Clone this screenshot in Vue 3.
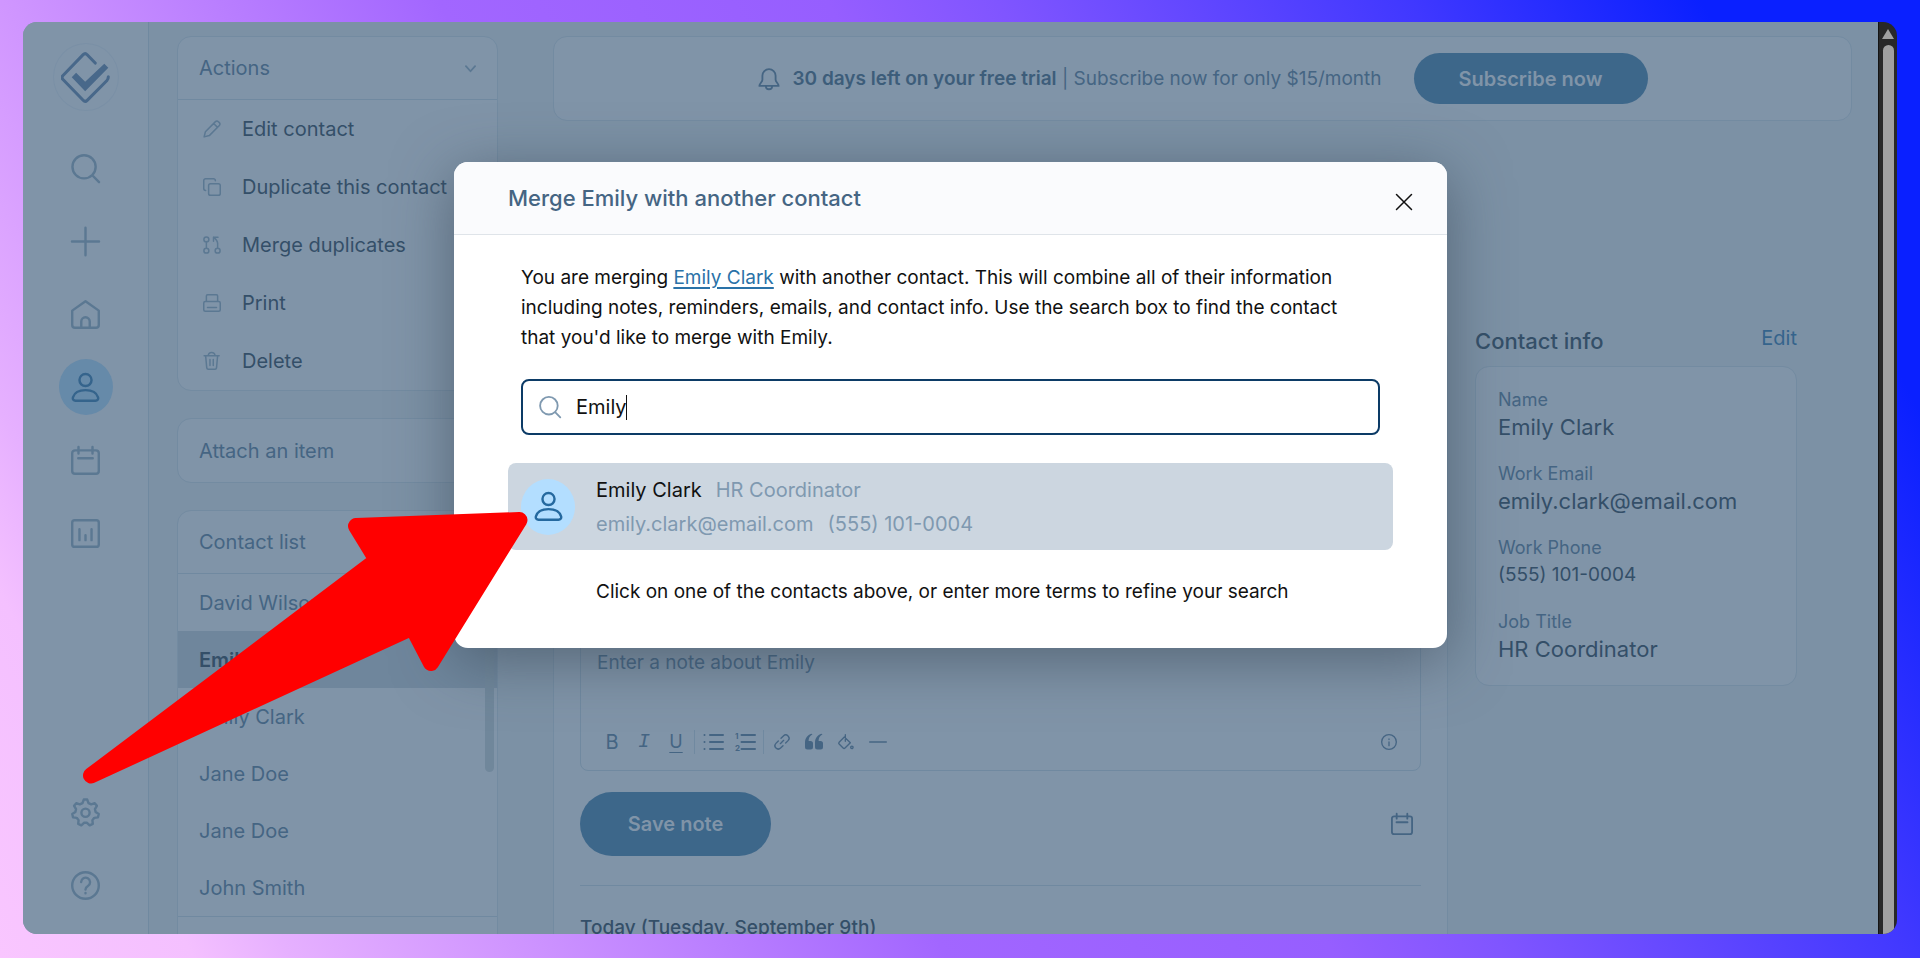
<script setup>
import { ref } from 'vue'

// 1. Icon paths, all on a 24 x 24 grid
const circle = (cx, cy, r) => `M${cx - r} ${cy}a${r} ${r} 0 1 0 ${r * 2} 0a${r} ${r} 0 1 0 ${-r * 2} 0z`

const gear = () => {
  const teeth = 7
  const points = []
  for (let i = 0; i < teeth; i++) {
    const mid = (i * 2 * Math.PI) / teeth - Math.PI / 2
    for (const [offset, radius] of [[-0.3, 8.4], [-0.13, 11], [0.13, 11], [0.3, 8.4]]) {
      const x = 12 + Math.cos(mid + offset) * radius
      const y = 12.2 + Math.sin(mid + offset) * radius
      points.push(`${x.toFixed(2)} ${y.toFixed(2)}`)
    }
  }
  return `M${points.join('L')}z${circle(12, 12.2, 3.4)}`
}

const icons = {
  search: `${circle(10.8, 10.6, 9.6)}M17.6 17.6L23.2 23.3`,
  plus: 'M12 .6V23.4M.8 12H23.2',
  home: 'M1 8.8L12 1L23 8.8V20.6a2.4 2.4 0 0 1-2.4 2.4H3.4a2.4 2.4 0 0 1-2.4-2.4zM8.5 23v-5.2a3.5 3.5 0 0 1 7 0V23',
  user: `${circle(12, 5.8, 5)}M12 14.2c-5.2 0-9.2 2.2-10.4 5.9c-.5 1.8.6 2.9 2.1 2.9h16.6c1.5 0 2.6-1.1 2.1-2.9c-1.2-3.7-5.2-5.9-10.4-5.9z`,
  calendar: 'M3.4 3.6H20.6a2.4 2.4 0 0 1 2.4 2.4V20.6a2.4 2.4 0 0 1-2.4 2.4H3.4a2.4 2.4 0 0 1-2.4-2.4V6a2.4 2.4 0 0 1 2.4-2.4zM6.2.8V6.2M17.8.8V6.2M6 10.1H18',
  chart: 'M3 1H21a2 2 0 0 1 2 2V21a2 2 0 0 1-2 2H3a2 2 0 0 1-2-2V3a2 2 0 0 1 2-2zM7 8.5V17.5M12 13.5V17.5M17 8.5V17.5',
  gear: gear(),
  help: `${circle(12, 12, 11)}M8.4 9.2a3.7 3.7 0 1 1 5.6 3.2c-1.4.8-2 1.4-2 2.9M12 18.2v.3`,
  pencil: 'M1.5 22.5L3.2 15.6L16.6 2.2a2.7 2.7 0 0 1 3.9 0l1.3 1.3a2.7 2.7 0 0 1 0 3.9L8.4 20.8zM14.2 4.6L19.4 9.8',
  copy: 'M10 7.5H20.500a2.500 2.500 0 0 1 2.500 2.500V20.500a2.500 2.500 0 0 1-2.500 2.500H10a2.500 2.500 0 0 1-2.500-2.500V10a2.500 2.500 0 0 1 2.500-2.500zM3.500 16.500a2.500 2.500 0 0 1-2.500-2.500V3.500A2.500 2.500 0 0 1 3.500 1H14a2.500 2.500 0 0 1 2.500 2.500',
  merge: `${circle(4.5, 4.5, 3.3)}${circle(4.5, 19.5, 3.3)}${circle(19.5, 19.5, 3.3)}M4.5 7.800V16.200M19.5 16.200V10c0-3-2-5.500-5.500-8.500M14 7V1.500H20`,
  printer: 'M4.5 10V2.5a1.5 1.5 0 0 1 1.5-1.5H18a1.5 1.5 0 0 1 1.5 1.5V10M3 10H21a2 2 0 0 1 2 2V21a2 2 0 0 1-2 2H3a2 2 0 0 1-2-2V12a2 2 0 0 1 2-2zM6 18H18',
  trash: 'M1.5 5H21.5M3.5 5L5 21.3a2 2 0 0 0 2 1.7H16a2 2 0 0 0 2-1.7L19.5 5M7 5a4.5 4.5 0 0 1 9 0M9.3 10V18M13.7 10V18',
  close: 'M2 2L22 22M22 2L2 22',
  chevron: 'M2 7L12 18L22 7',
  bell: 'M12 1.2a7.2 7.2 0 0 0-7.2 7.2v4.4c0 2.6-3.3 4-3.3 6.7h21c0-2.7-3.3-4.1-3.3-6.7V8.4A7.2 7.2 0 0 0 12 1.2zM8.6 19.8a3.4 3.4 0 0 0 6.8 0',
  link: 'M9.5 14.5L14.5 9.5M10.5 6.5l3.6-3.6a4.9 4.9 0 0 1 7 7l-3.6 3.6M13.5 17.5l-3.6 3.6a4.9 4.9 0 0 1-7-7l3.6-3.6',
  fill: `M9.5 4.5L1.7 12.3a2 2 0 0 0 0 2.8l6 6a2 2 0 0 0 2.8 0L18.5 13zM11 1V11${circle(20.8, 20, 1.8)}`,
  line: 'M1 12H23',
  info: `${circle(12, 12, 11)}M12 7.5v.8M12 12v5.5`
}

// 2. Page data
const mainNav = ['search', 'plus', 'home', 'user', 'calendar', 'chart']
const footNav = ['gear', 'help']
const activeNav = ref('user')

const actions = [
  { icon: 'pencil', label: 'Edit contact' },
  { icon: 'copy', label: 'Duplicate this contact' },
  { icon: 'merge', label: 'Merge duplicates' },
  { icon: 'printer', label: 'Print' },
  { icon: 'trash', label: 'Delete' }
]

const contacts = ['David Wilson', 'Emily Clark', 'Emily Clark', 'Jane Doe', 'Jane Doe', 'John Smith']
const selected = ref(1)

const details = [
  { label: 'Name', value: 'Emily Clark' },
  { label: 'Work Email', value: 'emily.clark@email.com' },
  { label: 'Work Phone', value: '(555) 101-0004', phone: true },
  { label: 'Job Title', value: 'HR Coordinator' }
]

const note = ref('')
const query = ref('Emily')
const isMerging = ref(true)

const closeModal = () => {
  isMerging.value = false
}
</script>

<template>
  <div class="stage">
    <div class="window">
      <div class="app">
        <nav class="sidebar">
          <a href="#" class="logo" aria-label="Dashboard">
            <svg viewBox="184 155 146 152">
              <path d="M286 188L262 163Q256 157 250 163L190 225Q184 231 190 237L250 299Q256 305 262 299L321 240Q325 236 325 229" fill="none" stroke="currentColor" stroke-width="9" stroke-linecap="round" stroke-linejoin="round" />
              <path d="M216 230L229 217L256 244L313 190L325 202L256 272z" fill="currentColor" />
            </svg>
          </a>
          <a v-for="name in mainNav" :key="name" href="#" class="nav-link" :class="{ active: name === activeNav }" :aria-label="name" @click.prevent="activeNav = name">
            <svg class="icon" viewBox="0 0 24 24"><path :d="icons[name]" /></svg>
          </a>
          <div class="nav-space"></div>
          <a v-for="name in footNav" :key="name" href="#" class="nav-link" :aria-label="name" @click.prevent="activeNav = name">
            <svg class="icon" viewBox="0 0 24 24"><path :d="icons[name]" /></svg>
          </a>
        </nav>

        <aside class="left-column">
          <section class="card">
            <h2 class="card-title divided">
              Actions
              <svg class="icon chevron" viewBox="0 0 24 24"><path :d="icons.chevron" /></svg>
            </h2>
            <button v-for="action in actions" :key="action.label" class="action">
              <svg class="icon" viewBox="0 0 24 24"><path :d="icons[action.icon]" /></svg>
              {{ action.label }}
            </button>
          </section>

          <section class="card">
            <h2 class="card-title">Attach an item</h2>
          </section>

          <section class="card">
            <h2 class="card-title divided">Contact list</h2>
            <div class="contacts">
              <a v-for="(name, index) in contacts" :key="index" href="#" class="contact" :class="{ selected: index === selected }" @click.prevent="selected = index">{{ name }}</a>
              <div class="list-thumb"></div>
            </div>
          </section>
        </aside>

        <main class="main">
          <div class="banner card">
            <svg class="icon bell" viewBox="0 0 24 24"><path :d="icons.bell" /></svg>
            <p class="banner-text"><strong>30 days left on your free trial</strong> | Subscribe now for only $15/month</p>
            <button class="pill subscribe">Subscribe now</button>
          </div>

          <div class="columns">
            <section class="card notes">
              <div class="editor">
                <textarea v-model="note" placeholder="Enter a note about Emily" aria-label="Note"></textarea>
                <div class="toolbar">
                  <button class="tool">B</button>
                  <button class="tool italic">I</button>
                  <button class="tool underline">U</button>
                  <span class="tool-split"></span>
                  <button class="tool" aria-label="Bulleted list">
                    <svg class="icon wide" viewBox="0 0 20 18"><path d="M1.5 2v.1M1.5 9v.1M1.5 16v.1M7 2H20M7 9H20M7 16H20" /></svg>
                  </button>
                  <button class="tool" aria-label="Numbered list">
                    <svg class="icon wide" viewBox="0 0 20 18">
                      <path d="M6.5 2H20M6.5 9H20M6.5 16H20" />
                      <text x="0" y="6">1</text>
                      <text x="0" y="18">2</text>
                    </svg>
                  </button>
                  <span class="tool-split"></span>
                  <button class="tool" aria-label="Link"><svg class="icon" viewBox="0 0 24 24"><path :d="icons.link" /></svg></button>
                  <button class="tool" aria-label="Quote">
                    <svg class="icon wide" viewBox="0 0 20 18">
                      <path class="solid" d="M8.5 1.2C5.5 3 4.6 5.2 4.6 8H6.5a2.5 2.5 0 0 1 2.5 2.5V14a2.5 2.5 0 0 1-2.5 2.5H3.5A2.5 2.5 0 0 1 1 14V9.5C1 5.5 3.5 2 7.5.8zM18.5 1.2C15.5 3 14.6 5.2 14.6 8H16.5a2.5 2.5 0 0 1 2.5 2.5V14a2.5 2.5 0 0 1-2.5 2.5H13.5A2.5 2.5 0 0 1 11 14V9.5C11 5.5 13.5 2 17.5.8z" />
                    </svg>
                  </button>
                  <button class="tool" aria-label="Highlight"><svg class="icon" viewBox="0 0 24 24"><path :d="icons.fill" /></svg></button>
                  <button class="tool" aria-label="Divider"><svg class="icon wide" viewBox="0 0 24 24"><path :d="icons.line" /></svg></button>
                  <button class="tool tool-info" aria-label="Formatting help"><svg class="icon" viewBox="0 0 24 24"><path :d="icons.info" /></svg></button>
                </div>
              </div>
              <div class="save-row">
                <button class="pill save">Save note</button>
                <button class="date-btn" aria-label="Pick a date"><svg class="icon" viewBox="0 0 24 24"><path :d="icons.calendar" /></svg></button>
              </div>
              <h3 class="day">Today (Tuesday, September 9th)</h3>
            </section>

            <aside class="info">
              <div class="info-head">
                <h2>Contact info</h2>
                <a href="#">Edit</a>
              </div>
              <dl class="card details">
                <div v-for="item in details" :key="item.label">
                  <dt>{{ item.label }}</dt>
                  <dd :class="{ phone: item.phone }">{{ item.value }}</dd>
                </div>
              </dl>
            </aside>
          </div>
        </main>

        <!-- Merge dialog -->
        <div v-if="isMerging" class="overlay" @click.self="closeModal">
          <div class="modal" role="dialog" aria-labelledby="merge-title">
            <header class="modal-head">
              <h1 id="merge-title">Merge Emily with another contact</h1>
              <button class="close-btn" aria-label="Close" @click="closeModal">
                <svg class="icon" viewBox="0 0 24 24"><path :d="icons.close" /></svg>
              </button>
            </header>
            <div class="modal-body">
              <p class="intro">You are merging <a href="#">Emily Clark</a> with another contact. This will combine all of their information including notes, reminders, emails, and contact info. Use the search box to find the contact that you'd like to merge with Emily.</p>
              <label class="search-box">
                <svg class="icon" viewBox="0 0 24 24"><path :d="icons.search" /></svg>
                <input v-model="query" type="text" aria-label="Search contacts">
                <span class="caret"></span>
              </label>
              <button class="result">
                <span class="avatar"><svg class="icon" viewBox="0 0 24 24"><path :d="icons.user" /></svg></span>
                <span class="result-text">
                  <span class="result-line"><span class="result-name">Emily Clark</span><span>HR Coordinator</span></span>
                  <span class="result-line"><span>emily.clark@email.com</span><span>(555) 101-0004</span></span>
                </span>
              </button>
              <p class="hint">Click on one of the contacts above, or enter more terms to refine your search</p>
            </div>
          </div>
        </div>
      </div>

      <div class="scrollbar">
        <div class="scroll-up"></div>
        <div class="scroll-thumb"></div>
      </div>
    </div>

    <!-- Pointer arrow -->
    <svg class="arrow" viewBox="83 511 446 273">
      <path d="M91 775.5L376.8 560.1L356 526L519.5 520L431 663L412.5 627.5z" />
    </svg>
  </div>
</template>

<style>
body {
  margin: 0;
}
</style>

<style scoped>
* { box-sizing: border-box; }
h1, h2, h3, p, dl, dd { margin: 0; font-weight: 400; }
a { text-decoration: none; color: inherit; }
button, input, textarea { font: inherit; color: inherit; }
button { border: none; background: none; padding: 0; cursor: pointer; }

.stage {
  position: relative;
  display: flex;
  height: 100vh;
  padding: 22px 23px 24px;
  background: linear-gradient(62deg, #f9c6ff 0%, #f4c0ff 8%, #e6b0ff 12%, #d096ff 21%, #a266ff 39%, #965eff 55%, #8055ff 62%, #4038ff 79%, #0a20ff 91%);
  font-family: Inter, "Liberation Sans", sans-serif;
  font-size: 19px;
  line-height: 30px;
  color: #344f68;
}
.window {
  display: flex;
  flex: 1;
  border-radius: 14px;
  overflow: hidden;
}
.app {
  position: relative;
  display: flex;
  flex: 1;
  min-width: 0;
  background: #7c91a5;
}

/* Icons */
.icon { display: block; width: 18px; height: 18px; flex: none; fill: none; stroke: currentColor; stroke-width: 2; stroke-linecap: round; stroke-linejoin: round; overflow: visible; }

/* Sidebar */
.sidebar {
  display: flex;
  flex-direction: column;
  align-items: center;
  gap: 17px;
  width: 126px;
  padding: 21px 0;
  background: #8094a8;
  border-right: 1px solid #7089a0;
  color: #5b7892;
}
.logo {
  display: flex;
  align-items: center;
  justify-content: center;
  width: 66px;
  height: 68px;
  margin-bottom: 12px;
  border: 1px solid #7a90a6;
  border-radius: 50%;
  color: #48688a;
}
.logo svg { width: 49px; height: 51px; }
.nav-link { display: flex; align-items: center; justify-content: center; width: 54px; height: 56px; border-radius: 50%; }
.nav-link .icon { width: 29px; height: 29px; }
.nav-link.active { background: #668aa9; color: #35648c; }
.nav-space { flex: 1; }

/* Left column */
.card { background: #8094a8; border: 1px solid #738ba1; border-radius: 14px; }
.left-column {
  display: flex;
  flex-direction: column;
  gap: 27px;
  width: 321px;
  margin: 14px 55px 0 28px;
  font-size: 20px;
}
.left-column .card { flex: none; overflow: hidden; }
.card-title {
  display: flex;
  align-items: center;
  justify-content: space-between;
  height: 63px;
  padding: 0 21px 0 21px;
  font-size: 20px;
  color: #456583;
}
.card-title.divided { border-bottom: 1px solid #7089a0; }
.chevron { width: 11px; height: 11px; stroke-width: 4; color: #5b7892; }
.action {
  display: flex;
  align-items: center;
  gap: 21px;
  width: 100%;
  height: 58px;
  padding-left: 25px;
}
.action .icon { color: #5b7892; }
.contacts { position: relative; border-bottom: 1px solid #7089a0; margin-bottom: 60px; }
.contact { display: flex; align-items: center; height: 57px; padding-left: 21px; color: #456583; }
.contact.selected { background: #6f869c; color: #344f68; font-weight: 600; }
.list-thumb { position: absolute; top: 0; right: 3px; width: 9px; height: 198px; border-radius: 5px; background: #70879b; }

/* Main area */
.main { display: flex; flex-direction: column; flex: 1; min-width: 0; padding: 14px 26px 0 0; }
.banner { display: flex; flex: none; align-items: center; justify-content: center; height: 85px; color: #456583; }
.banner strong { font-weight: 600; color: #3d5d7a; }
.bell { width: 22px; height: 22px; margin-right: 13px; }
.pill { border-radius: 32px; background: #3d678a; color: #8094a8; font-size: 20px; font-weight: 600; }
.subscribe { width: 234px; height: 51px; margin-left: 32px; }
.columns { display: flex; flex: 1; gap: 27px; padding: 205px 55px 0 0; }
.notes { flex: 1; min-width: 0; padding: 290px 26px 0; border-radius: 14px 14px 0 0; border-bottom: none; }
.editor { border: 1px solid #7089a0; border-radius: 8px; }
textarea { display: block; width: 100%; height: 96px; padding: 30px 16px 0; border: none; outline: none; resize: none; background: transparent; line-height: 30px; }
textarea::placeholder { color: #456583; opacity: 1; }
.toolbar { display: flex; align-items: center; height: 56px; padding: 0 15px; color: #456583; }
.tool { display: flex; align-items: center; justify-content: center; width: 32px; height: 32px; font-size: 20px; line-height: 24px; }
.tool .icon { width: 16px; height: 16px; }
.tool .icon.wide { width: 20px; height: 18px; }
.icon text { fill: currentColor; stroke: none; font-size: 8px; font-weight: 700; }
.icon .solid { fill: currentColor; stroke: none; }
.italic { font-family: "Liberation Mono", monospace; font-style: italic; }
.underline { font-size: 18px; text-decoration: underline; text-underline-offset: 4px; }
.tool-split { width: 1px; height: 24px; margin: 0 2px; background: #7089a0; }
.tool-info { margin-left: auto; }
.save-row { display: flex; align-items: center; justify-content: space-between; padding: 21px 8px 29px 0; border-bottom: 1px solid #7089a0; }
.save { width: 191px; height: 64px; }
.date-btn { color: #456583; }
.date-btn .icon { width: 22px; height: 22px; }
.day { margin-top: 27px; font-size: 19px; font-weight: 500; }

/* Contact info */
.info { width: 322px; }
.info-head { display: flex; justify-content: space-between; height: 40px; }
.info-head h2 { font-size: 22px; font-weight: 500; }
.info-head a { margin-top: -3px; font-size: 20px; color: #35648c; }
.details { display: flex; flex-direction: column; gap: 20px; height: 320px; padding: 19px 22px; }
dt { font-size: 18px; line-height: 28px; color: #456583; }
dd { font-size: 22px; line-height: 26px; }
dd.phone { font-size: 19px; }

/* Merge dialog */
.overlay { position: absolute; inset: 0; display: flex; align-items: flex-start; justify-content: center; padding-top: 140px; }
.modal {
  width: 993px;
  border-radius: 14px;
  background: #fff;
  color: #111;
  box-shadow: 0 12px 60px rgba(55, 70, 85, 0.6);
}
.modal-head {
  display: flex;
  align-items: center;
  justify-content: space-between;
  height: 73px;
  padding: 0 34px 0 54px;
  border-bottom: 1px solid #dfe4e9;
  border-radius: 14px 14px 0 0;
  background: #fafbfd;
}
.modal-head h1 { font-size: 22px; font-weight: 500; color: #456583; }
.close-btn { margin-top: 7px; }
.modal-body { padding: 28px 54px 41px; }
.intro { padding: 0 24px 0 13px; }
.intro a { color: #2a72a8; text-decoration: underline; text-underline-offset: 3px; text-decoration-thickness: 2px; }
.search-box {
  position: relative;
  display: flex;
  align-items: center;
  gap: 15px;
  height: 56px;
  margin: 26px 13px 28px;
  padding: 0 16px;
  border: 2px solid #0c3b66;
  border-radius: 8px;
  font-size: 20px;
}
.search-box .icon { width: 22px; height: 22px; color: #7f99b0; }
.search-box input { flex: 1; min-width: 0; padding: 0; border: none; outline: none; background: none; caret-color: transparent; }
.caret { position: absolute; left: 103px; top: 14px; width: 1px; height: 25px; background: #111; }
.result {
  display: flex;
  align-items: center;
  width: 100%;
  height: 87px;
  padding-left: 13px;
  border-radius: 8px;
  background: #ccd6e0;
  color: #7f99b0;
  font-size: 20px;
  text-align: left;
}
.avatar { display: flex; align-items: center; justify-content: center; width: 54px; height: 56px; margin-right: 21px; border-radius: 50%; background: #b3deff; color: #25699f; }
.avatar .icon { width: 29px; height: 29px; }
.result-text { display: flex; flex-direction: column; gap: 4px; }
.result-line { display: flex; gap: 14px; }
.result-name { color: #111; }
.hint { margin-top: 27px; padding-left: 88px; }

/* Browser scrollbar */
.scrollbar { display: flex; flex-direction: column; align-items: center; width: 19px; padding: 7px 4px 0; border-left: 1px solid #141414; background: #282828; }
.scroll-up { border: 6px solid transparent; border-top: none; border-bottom: 10px solid #a0a0a0; }
.scroll-thumb { flex: 1; width: 11px; margin-top: 6px; border-radius: 6px 6px 0 0; background: #a0a0a0; }

.arrow { position: absolute; left: 83px; top: 511px; width: 446px; height: 273px; pointer-events: none; }
.arrow path { fill: #ff0000; stroke: #ff0000; stroke-width: 16px; stroke-linejoin: round; }
</style>
